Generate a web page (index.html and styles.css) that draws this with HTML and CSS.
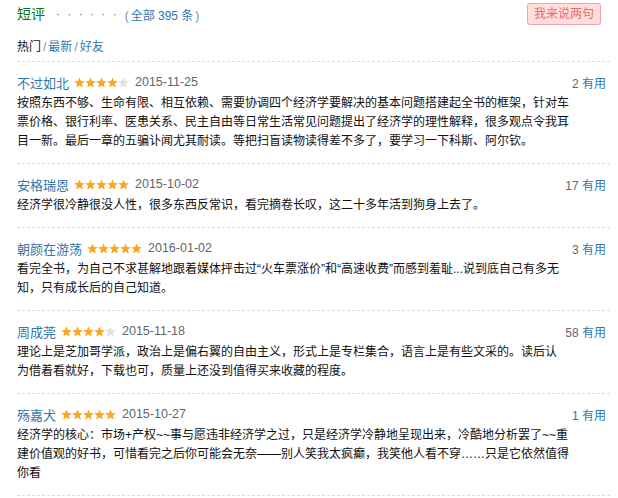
FILE: index.html
```html
<!DOCTYPE html>
<html lang="zh-CN">
<head>
<meta charset="utf-8">
<title>短评</title>
<link rel="stylesheet" href="styles.css">
</head>
<body>
<svg class="defs" width="0" height="0" aria-hidden="true">
  <symbol id="star" viewBox="0 0 11 11">
    <path d="M5.5 0.4 L7 3.9 L10.8 4.2 L7.9 6.7 L8.8 10.5 L5.5 8.5 L2.2 10.5 L3.1 6.7 L0.2 4.2 L4 3.9 Z"/>
  </symbol>
</svg>
<div class="wrap">
  <div class="hd">
    <h2 class="title">短评</h2>
    <span class="dots">· · · · · ·</span>
    <span class="count"><span class="paren">(</span><a href="#">全部 395 条</a><span class="paren">)</span></span>
    <a class="btn" href="#">我来说两句</a>
  </div>
  <div class="tabs"><span class="cur">热门</span><span class="sep">/</span><a href="#">最新</a><span class="sep">/</span><a href="#">好友</a></div>

  <ul class="list">
    <li class="item">
      <div class="meta">
        <a class="name" href="#">不过如北</a>
        <span class="stars"><svg class="on"><use href="#star"/></svg><svg class="on"><use href="#star"/></svg><svg class="on"><use href="#star"/></svg><svg class="on"><use href="#star"/></svg><svg class="off"><use href="#star"/></svg></span>
        <span class="date">2015-11-25</span>
        <span class="vote"><span class="num">2</span> <a href="#">有用</a></span>
      </div>
      <p class="txt">按照东西不够、生命有限、相互依赖、需要协调四个经济学要解决的基本问题搭建起全书的框架，针对车<br>票价格、银行利率、医患关系、民主自由等日常生活常见问题提出了经济学的理性解释，很多观点令我耳<br>目一新。最后一章的五骗讣闻尤其耐读。等把扫盲读物读得差不多了，要学习一下科斯、阿尔钦。</p>
    </li>
    <li class="item">
      <div class="meta">
        <a class="name" href="#">安格瑞恩</a>
        <span class="stars"><svg class="on"><use href="#star"/></svg><svg class="on"><use href="#star"/></svg><svg class="on"><use href="#star"/></svg><svg class="on"><use href="#star"/></svg><svg class="on"><use href="#star"/></svg></span>
        <span class="date">2015-10-02</span>
        <span class="vote"><span class="num">17</span> <a href="#">有用</a></span>
      </div>
      <p class="txt">经济学很冷静很没人性，很多东西反常识，看完摘卷长叹，这二十多年活到狗身上去了。</p>
    </li>
    <li class="item">
      <div class="meta">
        <a class="name" href="#">朝颜在游荡</a>
        <span class="stars"><svg class="on"><use href="#star"/></svg><svg class="on"><use href="#star"/></svg><svg class="on"><use href="#star"/></svg><svg class="on"><use href="#star"/></svg><svg class="on"><use href="#star"/></svg></span>
        <span class="date">2016-01-02</span>
        <span class="vote"><span class="num">3</span> <a href="#">有用</a></span>
      </div>
      <p class="txt">看完全书，为自己不求甚解地跟着媒体抨击过“火车票涨价”和“高速收费”而感到羞耻...说到底自己有多无<br>知，只有成长后的自己知道。</p>
    </li>
    <li class="item">
      <div class="meta">
        <a class="name" href="#">周成莞</a>
        <span class="stars"><svg class="on"><use href="#star"/></svg><svg class="on"><use href="#star"/></svg><svg class="on"><use href="#star"/></svg><svg class="on"><use href="#star"/></svg><svg class="off"><use href="#star"/></svg></span>
        <span class="date">2015-11-18</span>
        <span class="vote"><span class="num">58</span> <a href="#">有用</a></span>
      </div>
      <p class="txt">理论上是芝加哥学派，政治上是偏右翼的自由主义，形式上是专栏集合，语言上是有些文采的。读后认<br>为借着看就好，下载也可，质量上还没到值得买来收藏的程度。</p>
    </li>
    <li class="item">
      <div class="meta">
        <a class="name" href="#">殇嘉犬</a>
        <span class="stars"><svg class="on"><use href="#star"/></svg><svg class="on"><use href="#star"/></svg><svg class="on"><use href="#star"/></svg><svg class="on"><use href="#star"/></svg><svg class="on"><use href="#star"/></svg></span>
        <span class="date">2015-10-27</span>
        <span class="vote"><span class="num">1</span> <a href="#">有用</a></span>
      </div>
      <p class="txt">经济学的核心：市场+产权~~事与愿违非经济学之过，只是经济学冷静地呈现出来，冷酷地分析罢了~~重<br>建价值观的好书，可惜看完之后你可能会无奈——别人笑我太疯癫，我笑他人看不穿……只是它依然值得<br>你看</p>
    </li>
  </ul>
</div>
</body>
</html>
```

FILE: styles.css
```css
* { box-sizing: border-box; }
html, body { margin: 0; padding: 0; background: #fff; }
body {
  font-family: "Liberation Sans", Arial, "Noto Sans CJK SC", sans-serif;
  font-size: 12px;
  color: #111;
}
a { color: #37a; text-decoration: none; }
.defs { position: absolute; width: 0; height: 0; overflow: hidden; }

.wrap { padding: 3px 8px 0 17px; }

.hd {
  display: flex;
  align-items: center;
  height: 22px;
}
.title {
  margin: 0;
  font-size: 14px;
  font-weight: normal;
  color: #072;
  line-height: 18px;
}
.dots {
  margin-left: 11px;
  color: #3a9a7a;
  font-size: 12px;
  letter-spacing: 2px;
}
.count { margin-left: 4px; font-size: 12px; }
.paren { color: #6a8fb0; margin: 0 2px; }
.btn {
  margin-left: auto;
  margin-right: 9px;
  height: 22px;
  line-height: 20px;
  padding: 0 6px;
  border: 1px solid #f9a3a3;
  border-radius: 3px;
  background: #ffdede;
  color: #e96b6b;
  font-size: 12px;
}

.tabs {
  margin-top: 13px;
  line-height: 18px;
  margin-bottom: 5px;
}
.tabs .cur { color: #111; }
.tabs .sep { color: #888; margin: 0 2px; }

.list { list-style: none; margin: 0; padding: 0; }
.item {
  border-top: 1px dashed #ddd;
  padding: 11px 0 12px;
}
.item:last-child { border-bottom: 1px dashed #ddd; }
.meta {
  display: flex;
  align-items: center;
  height: 18px;
  margin-bottom: 3px;
}
.name { font-size: 13px; }
.stars { display: flex; margin-left: 5px; }
.stars svg { width: 11px; height: 11px; }
.stars .on { fill: #fba722; }
.stars .off { fill: #e2e2e2; }
.date { margin-left: 6px; color: #666; font-size: 12.5px; }
.vote { margin-left: auto; margin-right: 4px; font-size: 12px; }
.vote .num { color: #666; }
.txt {
  margin: 0;
  line-height: 19px;
}
```
